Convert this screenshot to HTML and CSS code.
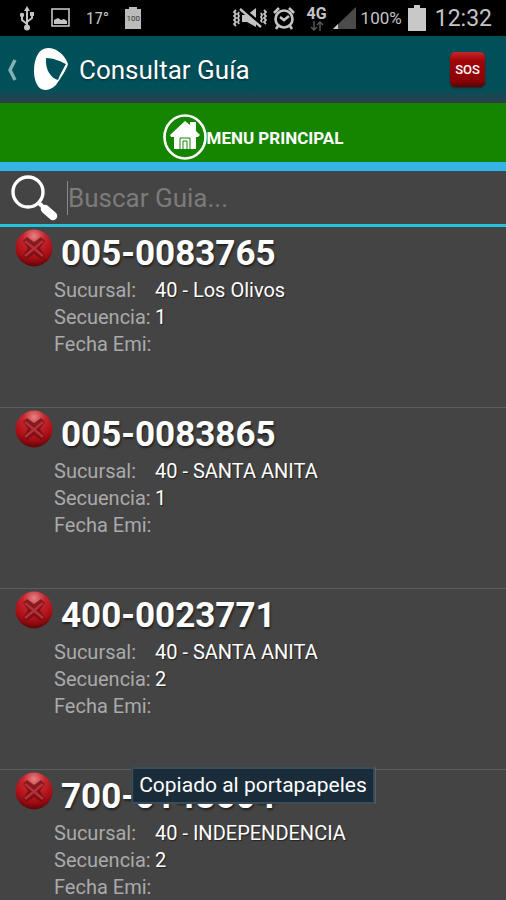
FILE: index.html
```html
<!DOCTYPE html>
<html lang="es">
<head>
<meta charset="utf-8">
<meta name="viewport" content="width=device-width, initial-scale=1">
<title>Consultar Guía</title>
<link rel="stylesheet" href="styles.css">
</head>
<body>
<svg class="defs" width="0" height="0" aria-hidden="true">
  <defs>
    <radialGradient id="ball" cx="50%" cy="18%" r="82%">
      <stop offset="0" stop-color="#e28484"/>
      <stop offset=".35" stop-color="#c8252e"/>
      <stop offset=".75" stop-color="#a50d14"/>
      <stop offset="1" stop-color="#5d0508"/>
    </radialGradient>
    <symbol id="error" viewBox="0 0 38 38">
      <circle cx="19" cy="19" r="18.5" fill="url(#ball)"/>
      <path d="M8 12l4-4 7 5 7-5 4 4-5 7 5 8-4 3-7-5-7 5-4-3 5-8z" fill="#6d0d12" opacity=".75"/>
      <path d="M10 12l18 15M28 12L10 27" fill="none" stroke="#b3323a" stroke-width="2.5"/>
    </symbol>
  </defs>
</svg>
<div class="statusbar">
  <div class="status-group status-left">
    <svg width="16" height="26" viewBox="0 0 16 26" fill="none" stroke="#c4c4c4" stroke-width="2"><path d="M8 5v17M8 19l-5-4V10M8 17l5-4V9"/><path d="M8 1l3 5H5zM11 7h4v4h-4z" fill="#c4c4c4" stroke="none"/><circle cx="3" cy="10" r="2.2" fill="#c4c4c4" stroke="none"/><circle cx="8" cy="22.5" r="3" fill="#c4c4c4" stroke="none"/></svg>
    <svg width="19" height="20" viewBox="0 0 19 20"><rect x="1" y="1" width="17" height="17" fill="none" stroke="#c4c4c4" stroke-width="1.6"/><path d="M3 16v-4l4-2 3 2 3-1 3 2v3z" fill="#c4c4c4"/></svg>
    <span class="temp">17°</span>
    <span class="mini-battery">100</span>
  </div>
  <div class="status-group status-right">
    <svg width="34" height="22" viewBox="0 0 34 22" fill="none" stroke="#c4c4c4" stroke-width="1.8"><path d="M3 3L1 5l2 2-2 2 2 2-2 2 2 2-2 2 2 2M6 5L5 7l1 2-1 2 1 2-1 2 1 2M31 3l2 2-2 2 2 2-2 2 2 2-2 2 2 2M28 6l1 2-1 2 1 2-1 2 1 2"/><path d="M9 8h5l9-7v19l-9-5H9z" fill="#c4c4c4" stroke="none"/><path d="M9 1l20 17" stroke="#000" stroke-width="3"/><path d="M7 2l21 18" stroke-width="2.4"/></svg>
    <svg class="alarm" width="24" height="24" viewBox="0 0 24 24" fill="none" stroke="#c4c4c4" stroke-width="2.6"><circle cx="12" cy="13" r="8.5"/><path d="M8 11l4 3 5-4M2 7l5-5M22 7l-5-5M6 20l-2 3M18 20l2 3"/></svg>
    <span class="network"><b>4G</b><svg width="14" height="10" viewBox="0 0 14 10" fill="none" stroke="#555" stroke-width="1.5"><path d="M4 0v8M1 6l3 3 3-3M10 10V2M7 4l3-3 3 3"/></svg></span>
    <svg class="signal" width="23" height="22" viewBox="0 0 23 22"><path d="M0 22L23 0v22z" fill="#4b4b4b"/><path d="M0 22l5-5v5z" fill="#d0d0d0"/></svg>
    <span class="percent">100%</span>
    <svg class="battery" width="18" height="26" viewBox="0 0 18 26"><path d="M6 0h6v3h6v23H0V3h6z" fill="#c8c8c8"/></svg>
    <time class="clock">12:32</time>
  </div>
</div>
<header class="appbar">
  <button class="back" type="button" aria-label="Atrás">
    <svg width="11" height="22" viewBox="0 0 11 22"><path d="M9 1L4 11l5 10" fill="none" stroke="#83b2b5" stroke-width="3.4"/></svg>
  </button>
  <svg class="logo" width="34" height="43" viewBox="0 0 34 43"><path d="M14 0C23 0 31 7 34 16 33 21 26 31 22 37 18 41 14 42 11 42 4 42 0 33 0 23 0 10 5 0 14 0z" fill="#fff"/><path d="M12 10C19 10 26 13 32 16 30 20 26 26 24 32 17 30 11 22 12 10z" fill="#00505a"/></svg>
  <h1 class="title">Consultar Guía</h1>
  <button class="sos" type="button">SOS</button>
</header>
<button class="menu" type="button">
  <svg width="44" height="46" viewBox="0 0 44 46"><ellipse cx="22" cy="23" rx="20.5" ry="21.5" fill="none" stroke="#fff" stroke-width="2.6"/><path d="M22 7l5 4V8h6v9l4 4-2 2h-2v12H11V23H8l-1-2z" fill="#fff"/><path d="M17 35V24h10v11M20 35v-8h4v8" fill="none" stroke="#168405" stroke-width="1"/></svg>
  <span>MENU PRINCIPAL</span>
</button>
<form class="search">
  <label for="guia" aria-label="Buscar guía"><svg width="48" height="48" viewBox="0 0 48 48"><circle cx="18" cy="18" r="15" fill="none" stroke="#fff" stroke-width="3.4"/><path d="M29 29l5 5" stroke="#fff" stroke-width="4"/><path d="M35 35l8 7" stroke="#fff" stroke-width="8.5" stroke-linecap="round"/></svg></label>
  <input id="guia" type="text" placeholder="Buscar Guia...">
</form>
<main class="list">
  <article class="item">
    <svg class="ball" width="38" height="38"><use href="#error"/></svg>
    <div class="info"><h2>005-0083765</h2>
      <dl><dt>Sucursal:</dt><dd>40 - Los Olivos</dd><dt>Secuencia:</dt><dd>1</dd><dt>Fecha Emi:</dt><dd></dd></dl></div>
  </article>
  <article class="item">
    <svg class="ball" width="38" height="38"><use href="#error"/></svg>
    <div class="info"><h2>005-0083865</h2>
      <dl><dt>Sucursal:</dt><dd>40 - SANTA ANITA</dd><dt>Secuencia:</dt><dd>1</dd><dt>Fecha Emi:</dt><dd></dd></dl></div>
  </article>
  <article class="item">
    <svg class="ball" width="38" height="38"><use href="#error"/></svg>
    <div class="info"><h2>400-0023771</h2>
      <dl><dt>Sucursal:</dt><dd>40 - SANTA ANITA</dd><dt>Secuencia:</dt><dd>2</dd><dt>Fecha Emi:</dt><dd></dd></dl></div>
  </article>
  <article class="item">
    <svg class="ball" width="38" height="38"><use href="#error"/></svg>
    <div class="info"><h2>700-0148604</h2>
      <dl><dt>Sucursal:</dt><dd>40 - INDEPENDENCIA</dd><dt>Secuencia:</dt><dd>2</dd><dt>Fecha Emi:</dt><dd></dd></dl></div>
  </article>
</main>
<div class="toast" role="status">Copiado al portapapeles</div>
</body>
</html>
```
FILE: styles.css
```css
* { box-sizing: border-box; }

body {
  display: flex;
  flex-direction: column;
  height: 100vh;
  margin: 0;
  overflow: hidden;
  background: #444;
  color: #fff;
  font-family: Roboto, "Liberation Sans", sans-serif;
}

button {
  padding: 0;
  border: 0;
  background: none;
  color: inherit;
  font: inherit;
}

svg { flex: none; display: block; }

.defs { position: absolute; }

.statusbar {
  display: flex;
  flex: none;
  align-items: center;
  justify-content: space-between;
  height: 36px;
  padding: 0 14px 0 19px;
  background: #000;
  color: #c4c4c4;
}

.status-group { display: flex; align-items: center; }
.status-left { gap: 16px; }

.temp { font: 17px "Roboto Condensed", "Liberation Sans Narrow", Roboto, sans-serif; }

.mini-battery {
  width: 16px;
  height: 22px;
  background:
    linear-gradient(#bbb, #bbb) top / 8px 2px no-repeat,
    linear-gradient(#bbb, #bbb) bottom / 16px 20px no-repeat;
  color: #333;
  font-size: 8px;
  line-height: 24px;
  text-align: center;
}

.alarm { margin-left: 5px; }

.network {
  display: flex;
  flex-direction: column;
  align-items: center;
  margin-left: 11px;
  font-size: 16px;
  line-height: 15px;
}

.signal { margin-left: 6px; }
.percent { margin-left: 5px; font-size: 17px; }
.battery { margin-left: 6px; }
.clock { margin-left: 9px; font-size: 23px; }

.appbar {
  display: flex;
  flex: none;
  align-items: center;
  height: 67px;
  padding: 0 21px 0 6px;
  background: linear-gradient(#00505a 78%, #2f3f4c);
}

.logo { margin-left: 17px; }

.title {
  flex: 1;
  margin: 0 0 0 11px;
  font-size: 26px;
  font-weight: 400;
  text-shadow: 0 1px 2px #002a30;
}

.sos {
  width: 35px;
  height: 35px;
  border-radius: 5px;
  background: linear-gradient(#c4262c, #a00508 25%, #8d0306 80%, #5c0204);
  box-shadow: 0 1px 2px #222;
  font-size: 13px;
  font-weight: 500;
}

.menu {
  display: flex;
  flex: none;
  align-items: center;
  justify-content: center;
  height: 68px;
  border-bottom: 9px solid #34b4e6;
  background: #158500;
  font-size: 17px;
  font-weight: 700;
}

.menu svg { margin-top: 8px; }
.menu span { margin-top: 10px; }

.search {
  display: flex;
  flex: none;
  align-items: center;
  height: 56px;
  padding: 0 10px;
  border-bottom: 3px solid #25c2dc;
}

.search input {
  flex: 1;
  min-width: 0;
  height: 34px;
  margin-left: 9px;
  padding: 0;
  border: 0;
  border-left: 1px solid #888;
  outline: 0;
  background: none;
  color: #fff;
  font: 26px/34px Roboto, "Liberation Sans", sans-serif;
}

.search input::placeholder { color: #7b7b7b; opacity: 1; }

.list { flex: 1; min-height: 0; overflow: hidden; }

.item {
  display: flex;
  height: 181px;
  padding: 2px 15px 0;
  border-bottom: 1px solid #5c5c5c;
}

.info { flex: 1; min-width: 0; }

h2 {
  margin: 5px 0 0 8px;
  font-size: 35px;
  line-height: 40px;
  text-shadow: 1px 2px 2px #222;
}

dl {
  display: grid;
  grid-template-columns: 101px 1fr;
  grid-auto-rows: 27px;
  margin: 3px 0 0 1px;
  font-size: 20px;
  line-height: 27px;
}

dt { color: #aaa; }
dd { margin: 0; text-shadow: 1px 1px 1px #222; }

.toast {
  position: fixed;
  bottom: 96px;
  left: 50%;
  transform: translateX(-50%);
  padding: 0 6px;
  border: 2px solid #3b4d59;
  background: #1a2b3a;
  font-size: 21px;
  line-height: 33px;
  white-space: nowrap;
}
```
